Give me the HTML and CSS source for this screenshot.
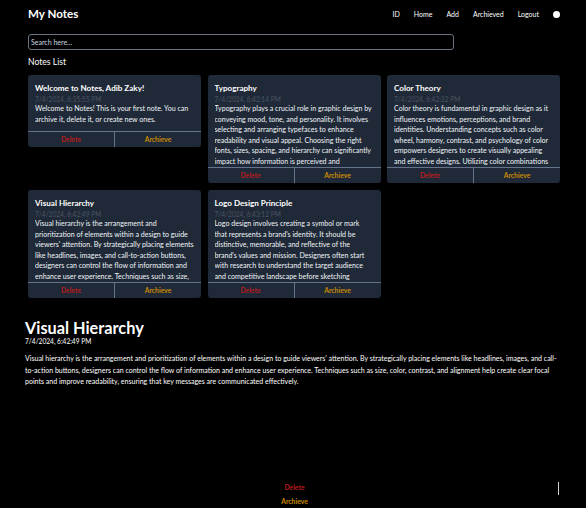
FILE: index.html
```
<!DOCTYPE html>
<html lang="en">
<head>
<meta charset="utf-8">
<title>My Notes</title>
<link rel="stylesheet" href="styles.css">
</head>
<body>
<header class="header">
  <h1 class="brand">My Notes</h1>
  <nav class="nav">
    <span class="nav-link">ID</span>
    <span class="nav-link">Home</span>
    <span class="nav-link">Add</span>
    <span class="nav-link">Archieved</span>
    <span class="nav-link">Logout</span>
    <span class="theme-dot"></span>
  </nav>
</header>
<main>
  <input class="search" type="text" placeholder="Search here...">
  <h2 class="list-title">Notes List</h2>
  <section class="grid">
    <article class="card">
      <div class="card-content">
        <h3 class="card-title">Welcome to Notes, Adib Zaky!</h3>
        <p class="card-date">7/4/2024, 6:35:55 PM</p>
        <p class="card-body">Welcome to Notes! This is your first note. You can archive it, delete it, or create new ones.</p>
      </div>
      <div class="card-actions"><button class="btn btn-delete">Delete</button><button class="btn btn-archive">Archieve</button></div>
    </article>
    <article class="card">
      <div class="card-content">
        <h3 class="card-title">Typography</h3>
        <p class="card-date">7/4/2024, 6:42:14 PM</p>
        <p class="card-body">Typography plays a crucial role in graphic design by conveying mood, tone, and personality. It involves selecting and arranging typefaces to enhance readability and visual appeal. Choosing the right fonts, sizes, spacing, and hierarchy can significantly impact how information is perceived and understood by the audience.</p>
      </div>
      <div class="card-actions"><button class="btn btn-delete">Delete</button><button class="btn btn-archive">Archieve</button></div>
    </article>
    <article class="card">
      <div class="card-content">
        <h3 class="card-title">Color Theory</h3>
        <p class="card-date">7/4/2024, 6:42:32 PM</p>
        <p class="card-body">Color theory is fundamental in graphic design as it influences emotions, perceptions, and brand identities. Understanding concepts such as color wheel, harmony, contrast, and psychology of color empowers designers to create visually appealing and effective designs. Utilizing color combinations strategically can evoke specific responses.</p>
      </div>
      <div class="card-actions"><button class="btn btn-delete">Delete</button><button class="btn btn-archive">Archieve</button></div>
    </article>
    <article class="card">
      <div class="card-content">
        <h3 class="card-title">Visual Hierarchy</h3>
        <p class="card-date">7/4/2024, 6:42:49 PM</p>
        <p class="card-body">Visual hierarchy is the arrangement and prioritization of elements within a design to guide viewers' attention. By strategically placing elements like headlines, images, and call-to-action buttons, designers can control the flow of information and enhance user experience. Techniques such as size, color, contrast, and alignment help create clear focal points.</p>
      </div>
      <div class="card-actions"><button class="btn btn-delete">Delete</button><button class="btn btn-archive">Archieve</button></div>
    </article>
    <article class="card">
      <div class="card-content">
        <h3 class="card-title">Logo Design Principle</h3>
        <p class="card-date">7/4/2024, 6:43:12 PM</p>
        <p class="card-body">Logo design involves creating a symbol or mark that represents a brand's identity. It should be distinctive, memorable, and reflective of the brand's values and mission. Designers often start with research to understand the target audience and competitive landscape before sketching concepts and refining them digitally.</p>
      </div>
      <div class="card-actions"><button class="btn btn-delete">Delete</button><button class="btn btn-archive">Archieve</button></div>
    </article>
  </section>

  <section class="detail">
    <h2 class="detail-title">Visual Hierarchy</h2>
    <p class="detail-date">7/4/2024, 6:42:49 PM</p>
    <p class="detail-body">Visual hierarchy is the arrangement and prioritization of elements within a design to guide viewers' attention. By strategically placing elements like headlines, images, and call-to-action buttons, designers can control the flow of information and enhance user experience. Techniques such as size, color, contrast, and alignment help create clear focal points and improve readability, ensuring that key messages are communicated effectively.</p>
    <div class="detail-footer">
      <div class="detail-actions">
        <button class="btn-plain btn-delete">Delete</button>
        <button class="btn-plain btn-archive">Archieve</button>
      </div>
      <span class="caret"></span>
    </div>
  </section>
</main>
</body>
</html>
```
FILE: styles.css
```
* { box-sizing: border-box; }
html, body { margin: 0; padding: 0; background: #000; }
body {
  color: #fff;
  font-family: Lato, "Noto Sans", sans-serif;
}
.header {
  display: flex;
  justify-content: space-between;
  align-items: center;
  height: 16px;
  margin-top: 6px;
  padding: 0 26px 0 28px;
}
.brand {
  margin: 0;
  font-size: 11.6px;
  font-weight: 700;
  line-height: 16px;
}
.nav {
  display: flex;
  align-items: center;
  gap: 14px;
}
.nav-link {
  font-size: 7px;
  color: #ffffff;
  line-height: 10px;
}
.theme-dot {
  width: 7px;
  height: 7px;
  border-radius: 50%;
  background: #fff;
}
.search {
  display: block;
  margin: 12px 0 0 28px;
  width: 426px;
  height: 16px;
  padding: 0 2px;
  background: #000;
  border: 1px solid #6b7280;
  border-radius: 3px;
  color: #fff;
  font-family: inherit;
  font-size: 7px;
  outline: none;
}
.search::placeholder { color: #cbd5e1; }
.list-title {
  margin: 7px 0 0 28px;
  font-size: 8.6px;
  font-weight: 400;
  line-height: 11px;
}
.grid {
  display: grid;
  grid-template-columns: repeat(3, 1fr);
  column-gap: 6.5px;
  row-gap: 7px;
  align-items: start;
  margin-top: 7px;
  padding: 0 26px 0 28px;
}
.card {
  background: #1f2937;
  border-radius: 3px;
  overflow: hidden;
}
.card-content {
  padding: 7px 7px 6px;
  max-height: 92px;
  overflow: hidden;
}
.card-title {
  margin: 0;
  font-size: 8.1px;
  font-weight: 700;
  line-height: 12px;
}
.card-date {
  margin: 0;
  font-size: 6.6px;
  line-height: 10px;
  color: #4b5563;
}
.card-body {
  margin: 0;
  font-size: 7.05px;
  line-height: 10.5px;
  max-height: 63px;
  overflow: hidden;
  color: #f1f5f9;
}
.card-actions {
  display: flex;
  border-top: 1px solid #64748b;
  height: 16px;
}
.btn {
  flex: 1;
  background: transparent;
  border: 0;
  padding: 0;
  font-family: inherit;
  font-size: 6.8px;
  font-weight: 700;
  line-height: 15px;
}
.btn + .btn { border-left: 1px solid #64748b; }
.btn-delete { color: #b91c1c; }
.btn-archive { color: #ca8a04; }

.detail {
  margin-top: 21px;
  padding: 0 22px 0 25px;
}
.detail-title {
  margin: 0;
  font-size: 16.3px;
  font-weight: 700;
  line-height: 18px;
}
.detail-date {
  margin: 0;
  font-size: 6.6px;
  line-height: 8px;
}
.detail-body {
  margin: 8px 0 0;
  font-size: 7.02px;
  line-height: 11.5px;
}
.detail-footer {
  display: grid;
  grid-template-columns: 1fr auto 1fr;
  align-items: start;
  margin-top: 94px;
}
.detail-actions {
  grid-column: 2;
  display: flex;
  flex-direction: column;
  align-items: center;
  gap: 4px;
}
.btn-plain {
  background: transparent;
  border: 0;
  padding: 0;
  font-family: inherit;
  font-size: 6.8px;
  font-weight: 700;
  line-height: 10px;
}
.caret {
  grid-column: 3;
  justify-self: end;
  width: 1px;
  height: 13px;
  margin-right: 5px;
  background: #d1d5db;
}
```
